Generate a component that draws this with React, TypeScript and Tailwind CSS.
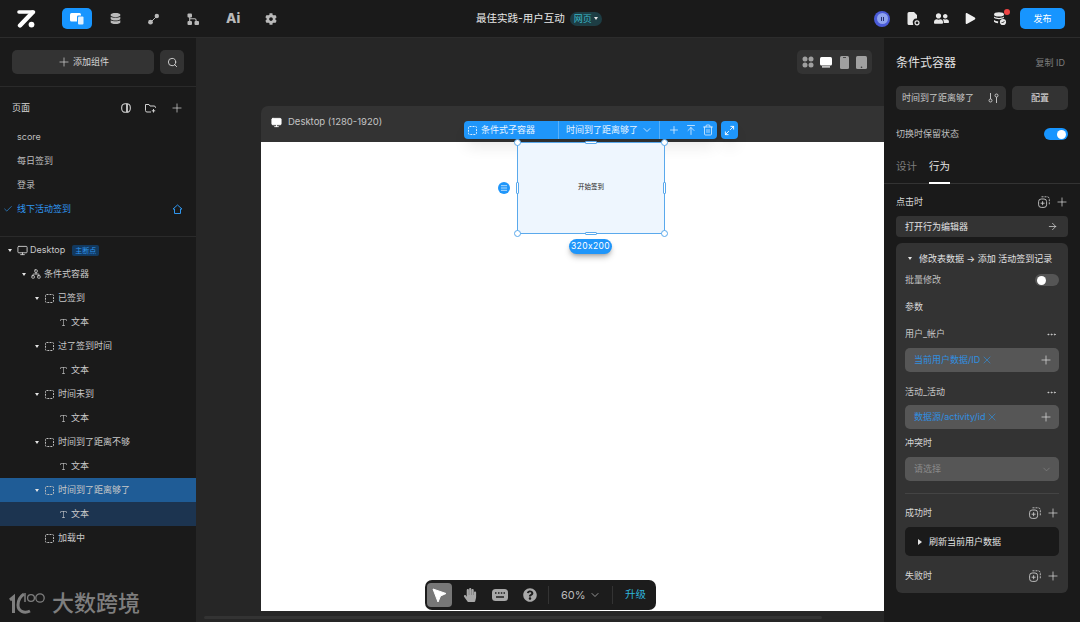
import React from "react";
import { Plus, Search, Check, ChevronDown, ArrowRight, MoreHorizontal, X, Trash2, ArrowUpToLine, Maximize2, Monitor, Network, Type, Menu } from "lucide-react";
import { FaCog, FaDatabase, FaHandPaper, FaPlay, FaUserFriends, FaQuestionCircle } from "react-icons/fa";

const font = { fontFamily: '"Inter","Noto Sans CJK SC",sans-serif' };

function Tri({ className = "" }: { className?: string }) {
  return <span className={`block w-0 h-0 border-l-[2.5px] border-r-[2.5px] border-t-[3px] border-l-transparent border-r-transparent border-t-[#e5e5e5] ${className}`} />;
}

function Dashed({ color = "#bdbdbd" }: { color?: string }) {
  return (
    <svg width="9" height="9" viewBox="0 0 9 9" fill="none" stroke={color} className="shrink-0">
      <rect x="0.5" y="0.5" width="8" height="8" rx="1" strokeDasharray="2 1" />
    </svg>
  );
}

function Logo() {
  return (
    <svg width="19" height="18" viewBox="0 0 19 18" className="shrink-0">
      <path d="M2 2h14.5" stroke="#fff" strokeWidth="3.6" strokeLinecap="round" />
      <path d="M15.5 2.5L3 15.5" stroke="#fff" strokeWidth="4.4" strokeLinecap="round" />
      <circle cx="14.5" cy="14.6" r="2.9" fill="#fff" />
    </svg>
  );
}

function Split() {
  return <span className="w-px h-[18px] bg-[#ffffff40] shrink-0" />;
}

function CopyAdd() {
  return (
    <svg width="12" height="12" viewBox="0 0 12 12" fill="none" stroke="#c8c8c8" strokeWidth="0.9">
      <rect x="0.6" y="3" width="8" height="8.4" rx="2.6" />
      <path d="M3.5 0.8h5.6a2.2 2.2 0 0 1 2.2 2.2v5.6" strokeDasharray="2 1" />
      <path d="M4.6 5.2v4M2.6 7.2h4" />
    </svg>
  );
}

function TreeRow({ depth, label, icon, tri = true, bg = "", badge }: { depth: number; label: string; icon: "d" | "n" | "b" | "t"; tri?: boolean; bg?: string; badge?: boolean }) {
  const pad = [8, 22, 35, 49][depth];
  return (
    <div className={`h-6 flex items-center text-[9px] text-[#c9c9c9] ${bg}`} style={{ paddingLeft: pad }}>
      <span className={`${depth < 2 ? "w-[9px]" : "w-[10px]"} shrink-0 flex`}>{tri && <Tri />}</span>
      {icon === "d" && <Monitor size={11} className="mr-[2px] text-[#d0d0d0]" />}
      {icon === "n" && <Network size={10} className="mr-[3px] text-[#d0d0d0]" />}
      {icon === "b" && <span className="mr-[4px] flex"><Dashed /></span>}
      {icon === "t" && <Type size={9} strokeWidth={1.5} className="mr-[3px] text-[#d8d8d8]" />}
      <span>{label}</span>
      {badge && <span className="ml-[7px] h-[11px] px-[3px] rounded-[2px] bg-[#12395f] text-[#2f96ee] text-[7px] leading-[11px]">主断点</span>}
    </div>
  );
}

function TopBar() {
  const c = "#b9b9b9";
  return (
    <header className="h-[38px] shrink-0 flex items-center bg-[#1a1a1a] border-b border-[#2c2c2c]">
      <div className="w-[476px] shrink-0 flex items-center">
        <div className="ml-[17px] mr-[26px] flex"><Logo /></div>
        <span className="w-[30px] h-[21px] rounded-[5px] bg-[#1795ff] flex items-center justify-center">
          <svg width="15" height="13" viewBox="0 0 15 13"><rect x="0" y="1" width="11" height="8.5" rx="1.5" fill="#fff" /><rect x="7" y="3.5" width="7.5" height="9" rx="1.3" fill="#1795ff" /><rect x="8" y="4.5" width="5.5" height="8" rx="1" fill="#dff0ff" /></svg>
        </span>
        <span className="ml-[18px] flex"><FaDatabase size={11} color={c} /></span>
        <svg width="12" height="12" viewBox="0 0 12 12" className="ml-[27px]" fill={c}>
          <circle cx="2.5" cy="9.2" r="2.4" /><rect x="6.6" y="0.8" width="4.4" height="4.4" rx="2.2" /><path d="M3 9l6-6" stroke={c} strokeWidth="1" />
        </svg>
        <svg width="12" height="12" viewBox="0 0 12 12" className="ml-[27px]" fill={c}>
          <rect x="0.5" y="0.5" width="4.5" height="4" rx="1" /><rect x="0.5" y="8" width="4.5" height="4" rx="1" /><rect x="7.5" y="8" width="4.5" height="4" rx="1" />
          <path d="M2.7 4v4M3 5.8h4.6a1.5 1.5 0 0 1 1.5 1.5V9" fill="none" stroke={c} strokeWidth="1.1" />
        </svg>
        <span className="ml-[27px] w-[16px] text-[13.5px] leading-none font-extrabold text-[#b9b9b9]">Ai</span>
        <span className="ml-[23px] flex"><FaCog size={12} color={c} /></span>
      </div>
      <div className="flex items-center">
        <span className="text-[10.5px] text-[#e8e8e8]">最佳实践-用户互动</span>
        <span className="ml-[5px] h-[14px] px-[4px] rounded-full bg-[#1d3d44] text-[#39b6c4] text-[9px] flex items-center gap-[2px]">网页<Tri className="border-t-[#39b6c4]" /></span>
      </div>
      <div className="ml-auto flex items-center">
        <span className="w-[16px] h-[16px] rounded-full bg-[#4a5bd8] flex items-center justify-center">
          <span className="w-[11px] h-[11px] rounded-full bg-[#8fa3ee] flex items-center justify-center gap-[1px]">
            <span className="w-px h-[4px] bg-[#26306e]" /><span className="w-px h-[4px] bg-[#26306e]" />
          </span>
        </span>
        <svg width="13" height="14" viewBox="0 0 13 14" className="ml-[17px]" fill="#e8e8e8">
          <path d="M2 0h5l3 3v3.6A3.6 3.6 0 0 0 6 11.6c0 .5.1 1 .3 1.4H2a1.5 1.5 0 0 1-1.5-1.5v-10A1.5 1.5 0 0 1 2 0z" />
          <circle cx="10" cy="10.8" r="2" fill="none" stroke="#e8e8e8" strokeWidth="1.2" />
        </svg>
        <span className="ml-[14px] flex"><FaUserFriends size={15} color="#e8e8e8" /></span>
        <span className="ml-[16px] flex"><FaPlay size={11} color="#f0f0f0" /></span>
        <span className="relative ml-[17px] flex">
          <svg width="14" height="14" viewBox="0 0 14 14" fill="#e8e8e8">
            <ellipse cx="6" cy="2.4" rx="5" ry="2.1" />
            <path d="M1 4.6c1.2 1.1 3 1.4 5 1.4s3.8-.3 5-1.4v1.2c-1.2 1-3 1.4-5 1.4s-3.8-.4-5-1.4z" />
            <path d="M1 8c1.2 1 2.8 1.2 4.2 1.3L5 11.2C3.2 11 1.8 10.6 1 9.7z" />
            <circle cx="10" cy="10" r="3.1" /><path d="M8.6 10l1 1 1.8-1.9" stroke="#1a1a1a" strokeWidth="0.9" fill="none" />
          </svg>
          <span className="absolute -top-[3px] -right-[3px] w-[6px] h-[6px] rounded-full bg-[#ef4444]" />
        </span>
        <button className="ml-[13px] mr-[15px] w-[45px] h-[21px] rounded-[5px] bg-[#1795ff] text-white text-[9px]">发布</button>
      </div>
    </header>
  );
}

function LeftPanel() {
  const pages = ["score", "每日签到", "登录"];
  return (
    <aside className="w-[196px] shrink-0 bg-[#1a1a1a] flex flex-col relative">
      <div className="h-[49px] px-3 flex items-start pt-3 gap-[6px] border-b border-[#2a2a2a]">
        <button className="w-[142px] h-6 rounded-[5px] bg-[#333333] text-[#d6d6d6] text-[9px] flex items-center justify-center gap-[2px]"><Plus size={14} strokeWidth={1.2} />添加组件</button>
        <button className="w-6 h-6 rounded-[5px] bg-[#333333] flex items-center justify-center"><Search size={11} className="text-[#d6d6d6]" /></button>
      </div>
      <div className="h-[150px] border-b border-[#2a2a2a]">
        <div className="h-[38px] pl-3 pr-[12px] pt-[3px] flex items-center justify-between text-[9px] text-[#d8d8d8]">
          <span>页面</span>
          <span className="flex items-center gap-[14px]">
            <svg width="10" height="10" viewBox="0 0 10 10" fill="none" stroke="#d0d0d0" strokeWidth="1.1"><rect x="0.7" y="0.7" width="8.6" height="8.6" rx="3.6" /><path d="M6 0.8v8.4" strokeWidth="1.8" /></svg>
            <svg width="11" height="10" viewBox="0 0 11 10" fill="none" stroke="#d0d0d0" strokeWidth="1"><path d="M6 9H2A1.5 1.5 0 0 1 .5 7.5v-6h3.5l1 1.5h4a1.5 1.5 0 0 1 1.5 1.5V5" /><path d="M8.5 6v3.5M6.8 7.8h3.4" /></svg>
            <Plus size={14} strokeWidth={1.2} className="text-[#d8d8d8]" />
          </span>
        </div>
        {pages.map((p) => <div key={p} className="h-6 flex items-center pl-[17px] text-[9px] text-[#bdbdbd]">{p}</div>)}
        <div className="h-6 flex items-center pl-[3px] pr-[13px] text-[9px] text-[#2f96ee]">
          <Check size={10} strokeWidth={1.6} className="mr-[4px]" />线下活动签到
          <svg width="11" height="11" viewBox="0 0 11 11" fill="none" stroke="#2f96ee" strokeWidth="1" className="ml-auto"><path d="M5.5 1L1 5h1.5v4.500h6V5H10z" strokeLinejoin="round" /></svg>
        </div>
      </div>
      <div className="pt-[1px]">
        <TreeRow depth={0} label="Desktop" icon="d" badge />
        <TreeRow depth={1} label="条件式容器" icon="n" />
        <TreeRow depth={2} label="已签到" icon="b" />
        <TreeRow depth={3} label="文本" icon="t" tri={false} />
        <TreeRow depth={2} label="过了签到时间" icon="b" />
        <TreeRow depth={3} label="文本" icon="t" tri={false} />
        <TreeRow depth={2} label="时间未到" icon="b" />
        <TreeRow depth={3} label="文本" icon="t" tri={false} />
        <TreeRow depth={2} label="时间到了距离不够" icon="b" />
        <TreeRow depth={3} label="文本" icon="t" tri={false} />
        <TreeRow depth={2} label="时间到了距离够了" icon="b" bg="bg-[#1f5c96]" />
        <TreeRow depth={3} label="文本" icon="t" tri={false} bg="bg-[#1c3450]" />
        <TreeRow depth={2} label="加载中" icon="b" tri={false} />
      </div>
      <div className="mt-auto mb-[7px] ml-[9px] flex items-center text-[#7e7e7e]">
        <svg width="42" height="24" viewBox="0 0 42 24" fill="none" stroke="#7e7e7e">
          <path d="M1 9l3.5-3v16" strokeWidth="3" />
          <path d="M21 20c-6 3-12 0-12-6s3-9 6-11" strokeWidth="3" />
          <circle cx="22" cy="7" r="3.4" strokeWidth="1.3" />
          <circle cx="31" cy="7" r="4.2" strokeWidth="1.3" />
          <path d="M16 2v9" strokeWidth="1.5" />
        </svg>
        <span className="ml-[1px] text-[22px] font-medium leading-none">大数跨境</span>
      </div>
    </aside>
  );
}

function Handle({ className }: { className: string }) {
  return <span className={`absolute bg-white border border-[#5aa9ec] ${className}`} />;
}

function Canvas() {
  return (
    <main className="relative flex-1 bg-[#262626] overflow-hidden">
      <div className="absolute left-[601px] top-[12px] w-[75px] h-6 rounded-[5px] bg-[#333333] flex items-center pl-[5px]">
        <svg width="12" height="12" viewBox="0 0 12 12" fill="#a0a0a0"><circle cx="3" cy="3" r="2.5" /><circle cx="9" cy="3" r="2.5" /><circle cx="3" cy="9" r="2.5" /><circle cx="9" cy="9" r="2.5" /></svg>
        <svg width="12" height="12" viewBox="0 0 12 12" fill="#fff" className="ml-[6px]"><rect x="0" y="1" width="12" height="8.5" rx="1.5" /><rect x="2" y="10.3" width="8" height="1.2" /></svg>
        <svg width="9" height="13" viewBox="0 0 9 13" fill="#a0a0a0" className="ml-[8px]"><rect width="9" height="13" rx="1.5" /><rect x="3" y="1" width="3" height="0.8" fill="#333" /></svg>
        <svg width="11" height="13" viewBox="0 0 11 13" fill="#a0a0a0" className="ml-[7px]"><rect width="11" height="13" rx="1.5" /><circle cx="5.5" cy="11.2" r="0.8" fill="#333" /></svg>
      </div>

      <div className="absolute left-[65px] top-[68px] right-0 h-[36px] rounded-tl-[7px] bg-[#333333] flex items-center pl-[10px] pb-[3px] text-[9.5px] text-[#c4c4c4]">
        <Monitor size={11} fill="#fff" className="text-white mr-[6px]" />Desktop (1280-1920)
      </div>
      <div className="absolute left-[65px] top-[104px] right-0 h-[469px] bg-white" />

      <div className="absolute left-[268px] top-[83px] h-[18px] flex gap-[4px]">
        <div className="w-[253px] h-[18px] rounded-[4px] bg-[#1f96fa] shadow-lg flex items-center text-[9px] text-[#e8f4ff]">
          <span className="w-[94px] pl-[4px] flex items-center gap-[4px]"><Dashed color="#d8ecff" />条件式子容器</span>
          <Split />
          <span className="w-[100px] pl-[7px] flex items-center whitespace-nowrap">时间到了距离够了<ChevronDown size={12} strokeWidth={1.5} className="ml-[3px] shrink-0" /></span>
          <Split />
          <span className="flex items-center gap-[5px] pl-[8px]">
            <Plus size={12} strokeWidth={1.5} /><ArrowUpToLine size={12} strokeWidth={1.5} /><Trash2 size={12} strokeWidth={1.5} />
          </span>
        </div>
        <div className="w-[17px] h-[18px] rounded-[4px] bg-[#1f96fa] flex items-center justify-center shadow-lg"><Maximize2 size={11} className="text-white" /></div>
      </div>

      <div className="absolute left-[321px] top-[104px] w-[148px] h-[92px] bg-[#eef6fe] border border-[#5aa9ec] flex items-center justify-center text-[6.5px] text-[#222]">
        开始签到
        <Handle className="-left-[4px] -top-[4px] w-[7px] h-[7px] rounded-full" />
        <Handle className="-right-[4px] -top-[4px] w-[7px] h-[7px] rounded-full" />
        <Handle className="-left-[4px] -bottom-[4px] w-[7px] h-[7px] rounded-full" />
        <Handle className="-right-[4px] -bottom-[4px] w-[7px] h-[7px] rounded-full" />
        <Handle className="left-[67px] -top-[2px] w-[12px] h-[3px] rounded-[1px]" />
        <Handle className="left-[67px] -bottom-[2px] w-[12px] h-[3px] rounded-[1px]" />
        <Handle className="-left-[2px] top-[39px] w-[3px] h-[12px] rounded-[1px]" />
        <Handle className="-right-[2px] top-[39px] w-[3px] h-[12px] rounded-[1px]" />
      </div>
      <span className="absolute left-[302px] top-[144px] w-3 h-3 rounded-full bg-[#1f96fa] flex items-center justify-center"><Menu size={8} className="text-white" /></span>
      <span className="absolute left-[373px] top-[201px] w-[43px] h-[15px] rounded-full bg-[#1f96fa] text-white text-[8.5px] flex items-center justify-center shadow-md shadow-[#0004] tracking-[0.4px]">320x200</span>

      <div className="absolute left-[229px] top-[542px] w-[231px] h-[30px] rounded-[7px] bg-[#1c1c1c] flex items-center pl-[2px] text-[#bbbbbb]">
        <span className="w-[25px] h-6 rounded-[4px] bg-[#777777] flex items-center justify-center">
          <svg width="15" height="15" viewBox="0 0 15 15"><path d="M1 1l13 4.5-5.500 2.500-2.500 6z" fill="#fff" stroke="#fff" strokeLinejoin="round" /></svg>
        </span>
        <span className="ml-[10px] w-4 flex justify-center"><FaHandPaper size={14} color="#a8a8a8" /></span>
        <svg width="16" height="12" viewBox="0 0 16 12" className="ml-[14px]">
          <rect width="16" height="12" rx="3.5" fill="#a8a8a8" />
          <path d="M3 4h1.500M6 4h1.500M8.800 4h1.500M11.500 4H13M4 8h8" stroke="#1c1c1c" strokeWidth="1.3" />
        </svg>
        <span className="ml-[15px] flex"><FaQuestionCircle size={14} color="#a8a8a8" /></span>
        <span className="ml-[11px] w-px h-[18px] bg-[#333]" />
        <span className="ml-[12px] w-[22px] text-[11px] whitespace-nowrap">60%</span>
        <ChevronDown size={12} strokeWidth={1.5} className="ml-[6px]" />
        <span className="ml-[11px] w-px h-[18px] bg-[#333]" />
        <span className="ml-[12px] text-[10.5px] text-[#2fb4dc]">升级</span>
      </div>

      <div className="absolute left-[8px] top-[578px] w-[618px] h-[3px] rounded-full bg-[#333333]" />
    </main>
  );
}

function Sw({ on }: { on: boolean }) {
  return (
    <span className={`w-6 h-3 rounded-full flex items-center px-[2px] ${on ? "bg-[#1795ff] justify-end" : "bg-[#555555]"}`}>
      <span className="w-[9px] h-[9px] rounded-full bg-white" />
    </span>
  );
}

function PlusIcon() {
  return <Plus size={14} strokeWidth={1.2} className="-mr-[1px] text-[#e0e0e0]" />;
}

function ParamField({ label, value, gap }: { label: string; value: string; gap: string }) {
  return (
    <div>
      <div className="h-[14px] flex items-center justify-between pr-[2px] text-[9px] text-[#c8c8c8]">{label}<MoreHorizontal size={11} className="text-[#d0d0d0]" /></div>
      <div className={`${gap} h-6 rounded-[5px] bg-[#565656] flex items-center pl-[9px] pr-[7px] text-[9px] text-[#2f8fe0]`}>
        {value}<X size={12} strokeWidth={1.3} className="ml-[1px]" /><span className="ml-auto flex"><PlusIcon /></span>
      </div>
    </div>
  );
}

function ActionHead({ label, gap }: { label: string; gap: string }) {
  return (
    <div className={`${gap} h-[14px] flex items-center justify-between text-[9px] text-[#d8d8d8]`}>
      {label}<span className="flex items-center gap-[5px]"><CopyAdd /><PlusIcon /></span>
    </div>
  );
}

function RightPanel() {
  return (
    <aside className="w-[196px] shrink-0 bg-[#1a1a1a] flex flex-col">
      <div className="h-[48px] pl-3 pr-[15px] flex items-center justify-between pt-[1px]">
        <span className="text-[12px] text-[#e2e2e2]">条件式容器</span>
        <span className="text-[9px] text-[#7d7d7d]">复制 ID</span>
      </div>
      <div className="px-3 flex gap-[6px]">
        <div className="w-[110px] h-6 rounded-[5px] bg-[#333333] flex items-center justify-between pl-[6px] pr-[7px] text-[9px] text-[#c8c8c8]">时间到了距离够了
          <svg width="11" height="10" viewBox="0 0 11 10" fill="none" stroke="#d0d0d0" strokeWidth="0.9"><path d="M2.5 0v6M8.5 4v6" /><circle cx="2.5" cy="7.5" r="1.5" /><circle cx="8.5" cy="2.5" r="1.5" /></svg>
        </div>
        <div className="w-[56px] h-6 rounded-[5px] bg-[#333333] flex items-center justify-center text-[9px] text-[#e0e0e0]">配置</div>
      </div>
      <div className="mt-[18px] px-3 h-[12px] flex items-center justify-between text-[9px] text-[#c0c0c0]">切换时保留状态<Sw on /></div>
      <div className="mt-[12px] h-[32px] border-b border-[#333333] px-3 flex items-center text-[10.5px]">
        <span className="text-[#7d7d7d] mr-[12px] pb-[2px]">设计</span>
        <span className="relative text-[#e6e6e6] h-full flex items-center pb-[2px]">行为<span className="absolute left-0 right-0 -bottom-px h-[2px] bg-white" /></span>
      </div>
      <div className="px-3"><ActionHead label="点击时" gap="mt-[11px]" /></div>
      <div className="mx-3 mt-[7px] h-[21px] rounded-[4px] bg-[#333333] pl-[9px] pr-[10px] flex items-center justify-between text-[9px] text-[#e2e2e2]">打开行为编辑器<ArrowRight size={11} strokeWidth={1.5} /></div>
      <div className="mx-3 mt-[6px] h-[350px] rounded-[6px] bg-[#333333] px-[9px] pt-[9px]">
        <div className="h-[13px] flex items-center pl-[3px] text-[9px] text-[#e2e2e2] whitespace-nowrap"><Tri className="mr-[7px]" />修改表数据 → 添加 活动签到记录</div>
        <div className="mt-[8px] h-[14px] flex items-center justify-between text-[9px] text-[#c0c0c0]">批量修改<Sw on={false} /></div>
        <div className="mt-[13px] h-[14px] flex items-center text-[9px] text-[#d8d8d8]">参数</div>
        <div className="mt-[13px]"><ParamField label="用户_帐户" value="当前用户数据/ID" gap="mt-[7px]" /></div>
        <div className="mt-[13px]"><ParamField label="活动_活动" value="数据源/activity/id" gap="mt-[6px]" /></div>
        <div className="mt-[7px] h-[14px] flex items-center text-[9px] text-[#d8d8d8]">冲突时</div>
        <div className="mt-[7px] h-6 rounded-[5px] bg-[#565656] flex items-center justify-between pl-[9px] pr-[7px] text-[9px] text-[#8a8a8a]">请选择<ChevronDown size={11} strokeWidth={1.3} /></div>
        <div className="mt-[12px] h-px bg-[#444444]" />
        <ActionHead label="成功时" gap="mt-[12px]" />
        <div className="mt-[7px] h-[29px] rounded-[5px] bg-[#1a1a1a] flex items-center pl-[13px] text-[9px] text-[#e2e2e2]"><span className="block w-0 h-0 border-t-[3px] border-b-[3px] border-l-[4px] border-t-transparent border-b-transparent border-l-[#e5e5e5] mr-[7px]" />刷新当前用户数据</div>
        <ActionHead label="失败时" gap="mt-[13px]" />
      </div>
    </aside>
  );
}

export default function App() {
  return (
    <div className="w-[1080px] h-[622px] flex flex-col overflow-hidden bg-[#1a1a1a]" style={font}>
      <TopBar />
      <div className="flex flex-1 min-h-0">
        <LeftPanel />
        <Canvas />
        <RightPanel />
      </div>
    </div>
  );
}
